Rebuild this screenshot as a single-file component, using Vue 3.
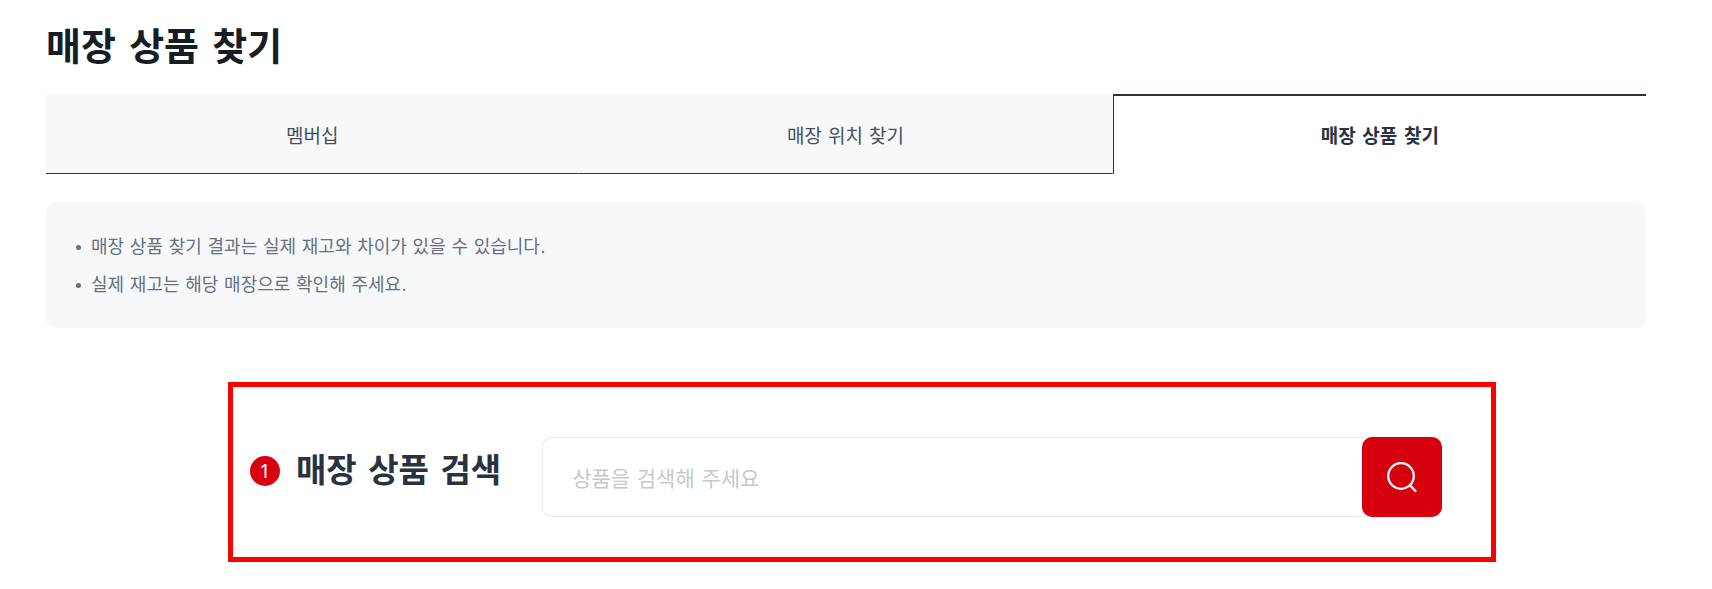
<template>
  <main class="page">
    <h1 class="page-title">매장 상품 찾기</h1>

    <nav class="tabs">
      <a
        v-for="tab in tabs"
        :key="tab.id"
        :href="`#${tab.id}`"
        class="tab"
        :class="{ active: tab.id === current }"
        @click.prevent="current = tab.id"
      >{{ tab.label }}</a>
    </nav>

    <ul class="notice">
      <li v-for="text in notices" :key="text">{{ text }}</li>
    </ul>

    <form class="search" @submit.prevent>
      <span class="step">1</span>
      <label class="search-title" for="keyword">매장 상품 검색</label>
      <div class="search-box">
        <input id="keyword" v-model="keyword" type="text" placeholder="상품을 검색해 주세요">
        <button type="submit" aria-label="검색">
          <svg viewBox="0 0 32 32" width="32" height="32" fill="none" stroke="#fff" stroke-width="2.3" stroke-linecap="round">
            <circle cx="15" cy="15" r="12.8" />
            <path d="M24 24.5L29.5 30" />
          </svg>
        </button>
      </div>
    </form>
  </main>
</template>

<script setup>
import { ref } from 'vue'

const tabs = [
  { id: 'membership', label: '멤버십' },
  { id: 'location', label: '매장 위치 찾기' },
  { id: 'product', label: '매장 상품 찾기' },
]
const notices = [
  '매장 상품 찾기 결과는 실제 재고와 차이가 있을 수 있습니다.',
  '실제 재고는 해당 매장으로 확인해 주세요.',
]
const current = ref('product')
const keyword = ref('')
</script>

<style>
body { margin: 0; background: #fff; }
</style>

<style scoped>
.page {
  padding: 20px 66px 24px 46px;
  font-family: "DejaVu Sans", "Noto Sans CJK KR", sans-serif;
  color: #29323e;
}
.page-title { margin: 0 0 20px; font-size: 38px; line-height: 54px; font-weight: 700; color: #161d24; }

.tabs { display: flex; }
.tab {
  flex: 1; height: 80px; box-sizing: border-box; padding-top: 4px;
  display: flex; align-items: center; justify-content: center;
  border-right: 1px solid #f7f8fa; border-bottom: 1px solid #29323e;
  background: #f7f8fa; color: #454f5b;
  font-size: 19px; line-height: 28px; text-decoration: none;
}
.tab.active {
  padding-top: 2px;
  border: solid #29323e; border-width: 2px 0 0 1px;
  background: #fff; color: #29323e; font-weight: 700;
}

.notice {
  margin: 28px 0 0; padding: 26px 30px 24px; list-style: none;
  background: #f7f8fa; border-radius: 10px;
}
.notice li {
  display: flex; align-items: center; gap: 10px;
  font-size: 18px; line-height: 38px; color: #66707f;
}
.notice li::before { content: ""; width: 5px; height: 5px; border-radius: 50%; background: #66707f; }

.search {
  display: flex; align-items: flex-start;
  margin: 54px 150px 0 182px; padding: 50px 49px 40px 17px;
  border: 5px solid #f00;
}
.step {
  width: 30px; height: 30px; margin: 19px 16px 0 0; border-radius: 50%;
  background: #d7000f; color: #fff;
  font-family: "Noto Sans", sans-serif; font-size: 20px; line-height: 30px; text-align: center;
}
.search-title { margin-right: 41px; font-size: 33px; line-height: 68px; font-weight: 700; white-space: nowrap; }
.search-box {
  flex: 1; display: flex; height: 80px; box-sizing: border-box;
  border-radius: 10px; box-shadow: inset 0 0 0 1px #e8e9ec;
}
.search-box input {
  flex: 1; min-width: 0; padding: 4px 30px 0; border: 0; outline: 0; background: none;
  font: 21px "DejaVu Sans", "Noto Sans CJK KR", sans-serif; color: #29323e;
}
.search-box input::placeholder { color: #c5c8ce; }
.search-box button {
  width: 80px; padding: 0; border: 0; border-radius: 10px; background: #d7000f;
  display: flex; align-items: center; justify-content: center; cursor: pointer;
}
</style>
